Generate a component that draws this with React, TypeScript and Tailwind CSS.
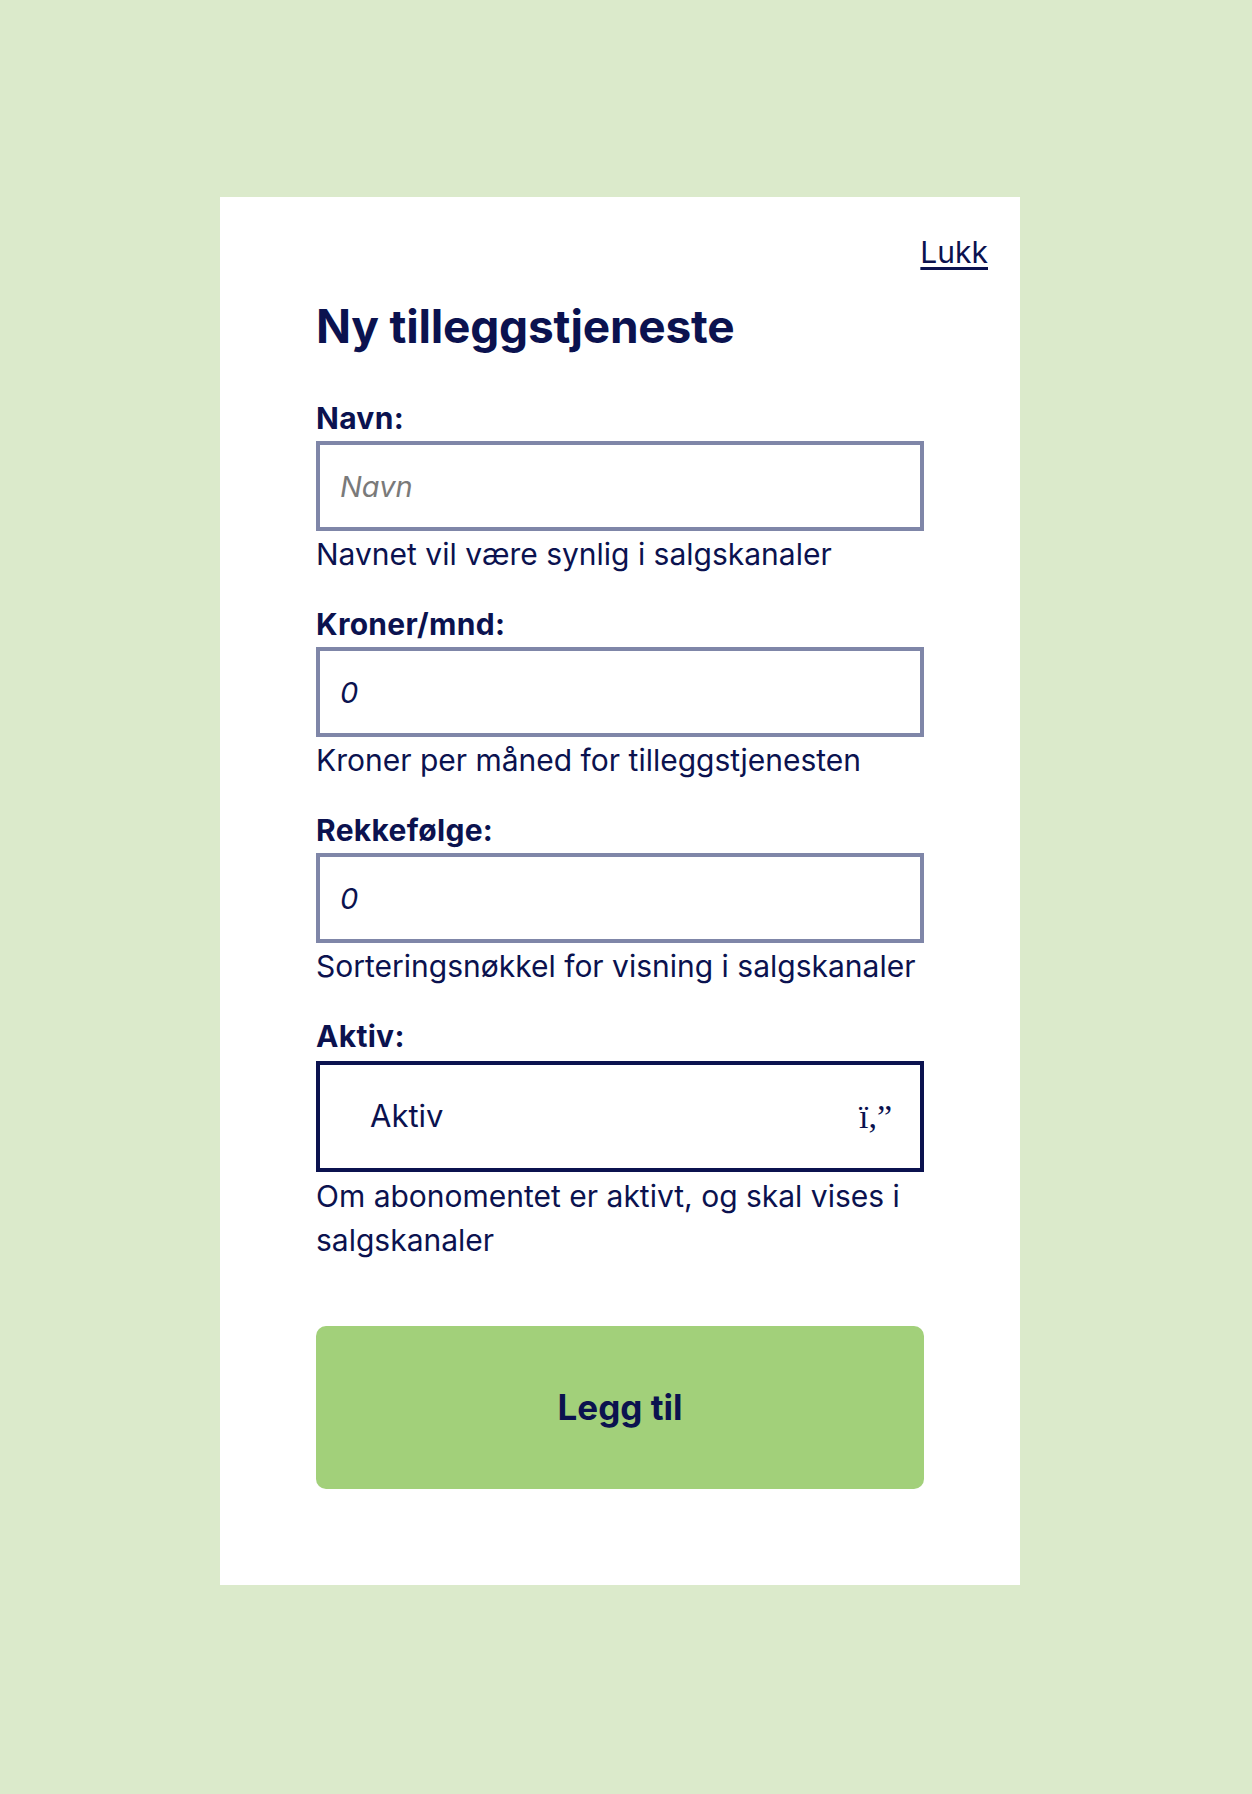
import React from "react";

const font = { fontFamily: "Inter, 'Liberation Sans', sans-serif" };

function Field({
  label,
  help,
  value,
  placeholder,
}: {
  label: string;
  help: string;
  value?: string;
  placeholder?: string;
}) {
  return (
    <div className="flex flex-col">
      <label className="text-[30px] leading-[40px] font-bold tracking-[0.3px] text-[#0b124f]">{label}</label>
      <input
        readOnly
        value={value}
        placeholder={placeholder}
        className="mt-[3px] h-[90px] w-[608px] border-4 border-[#7f86a8] bg-white px-[20px] text-[29px] italic text-[#0b124f] outline-none placeholder:text-[#7a7a7a]"
        style={font}
      />
      <p className="mt-[1px] text-[30px] leading-[44px] text-[#0b124f]">{help}</p>
    </div>
  );
}

export default function App() {
  return (
    <div className="min-h-screen w-full bg-[#dbeacb] pt-[197px] pb-[209px]" style={font}>
      <div className="ml-[220px] w-[800px] bg-white pb-[96px]">
        <div className="flex justify-end pt-[35px] pr-[32px]">
          <a href="#" className="text-[30px] leading-[40px] text-[#0b124f] underline underline-offset-[4px]">
            Lukk
          </a>
        </div>
        <div className="px-[96px]">
          <h1 className="mt-[27px] text-[46px] leading-[54px] font-bold tracking-[-0.2px] text-[#0b124f]">
            Ny tilleggstjeneste
          </h1>
          <div className="mt-[45px] flex flex-col gap-[28px]">
            <Field label="Navn:" placeholder="Navn" help="Navnet vil være synlig i salgskanaler" />
            <Field label="Kroner/mnd:" value="0" help="Kroner per måned for tilleggstjenesten" />
            <Field label="Rekkefølge:" value="0" help="Sorteringsnøkkel for visning i salgskanaler" />
            <div className="flex flex-col">
              <label className="text-[30px] leading-[40px] font-bold tracking-[0.3px] text-[#0b124f]">Aktiv:</label>
              <div className="mt-[5px] flex h-[111px] w-[608px] items-center justify-between border-4 border-[#0b124f] pl-[50px] pr-[28px]">
                <span className="text-[31px] text-[#0b124f]">Aktiv</span>
                <span
                  className="text-[34px] text-[#0b124f]"
                  style={{ fontFamily: "'Liberation Serif', serif" }}
                >
                  ï,”
                </span>
              </div>
              <p className="mt-[2px] text-[30px] leading-[44px] text-[#0b124f]">
                Om abonomentet er aktivt, og skal vises i salgskanaler
              </p>
            </div>
          </div>
          <button className="mt-[64px] flex h-[163px] w-[608px] items-center justify-center rounded-[10px] bg-[#a2d07a] text-[35px] font-bold text-[#0b124f]">
            Legg til
          </button>
        </div>
      </div>
    </div>
  );
}
